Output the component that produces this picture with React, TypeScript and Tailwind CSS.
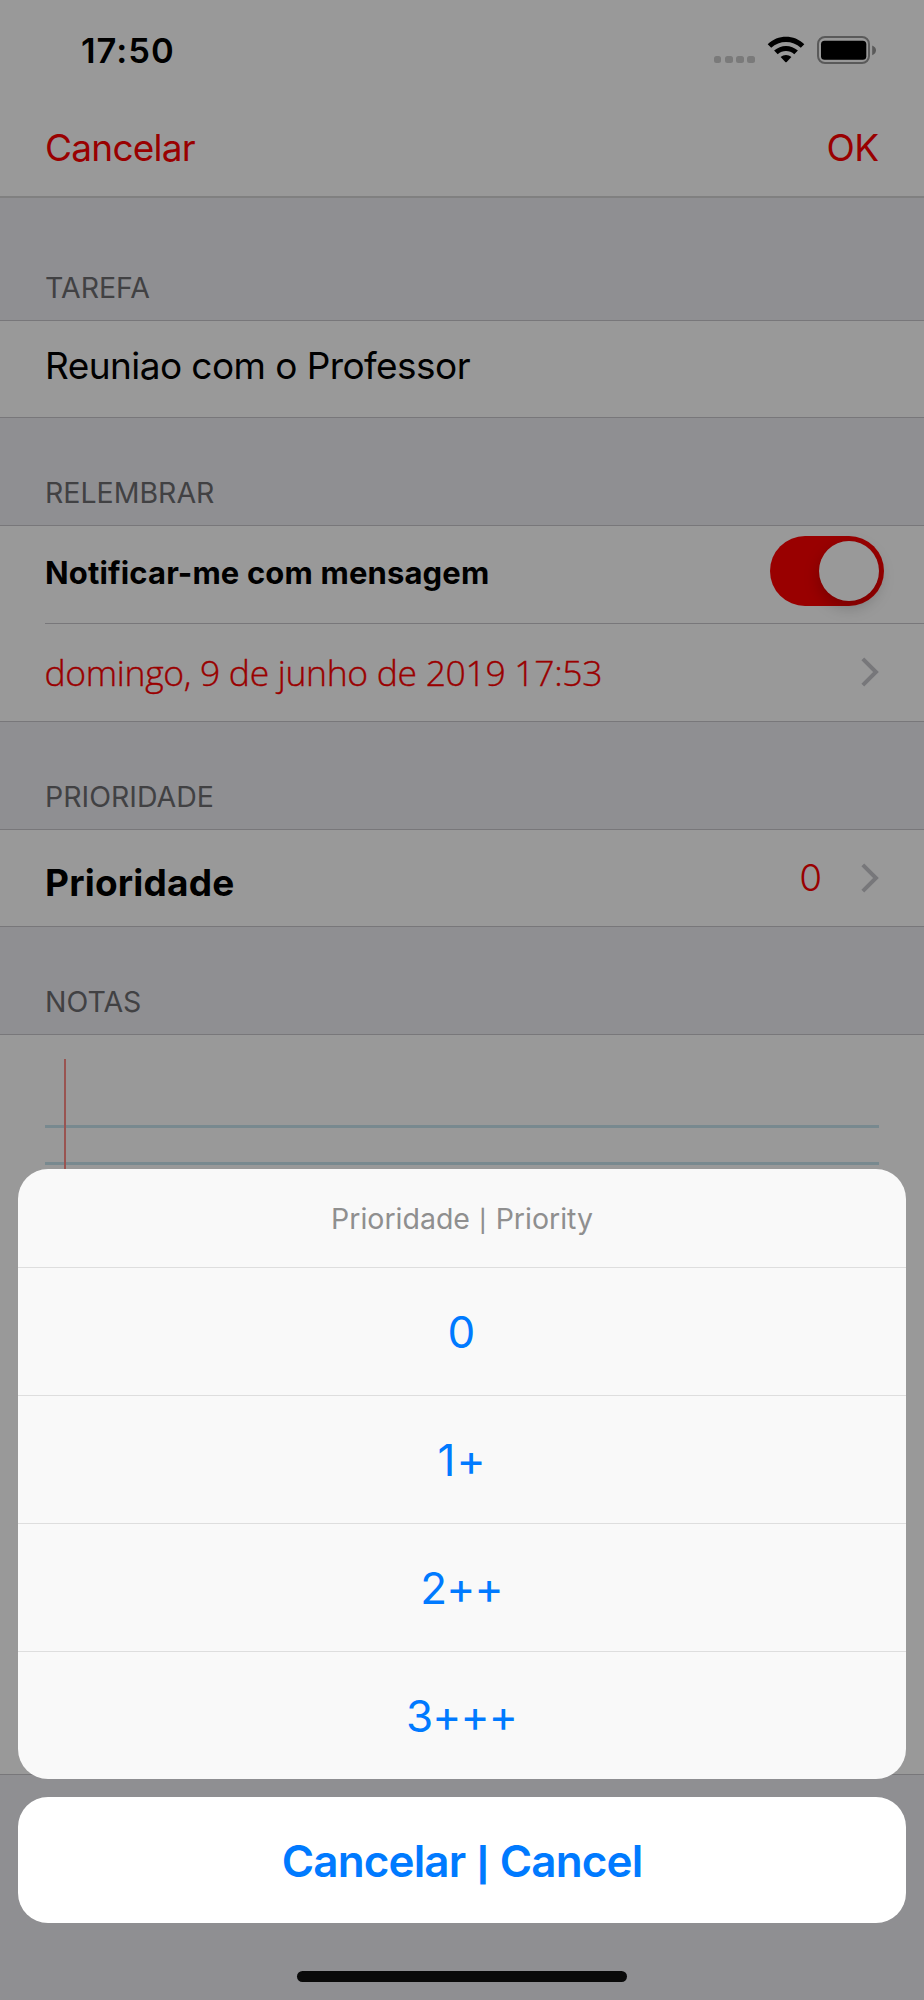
import type { ReactNode } from "react";

const options = [
  { label: "0", spacing: "pr-[1px]" },
  { label: "1+", spacing: "tracking-[1px]" },
  { label: "2++", spacing: "pr-[1px] tracking-[-0.9px]" },
  { label: "3+++", spacing: "pr-[1px] tracking-[-0.9px]" },
];

function StatusBar() {
  return (
    <div className="flex h-[101px] items-center justify-between pr-[47px] pl-[81px]">
      <span className="mt-[2px] text-[34.5px] leading-none font-semibold tracking-[1px]">17:50</span>
      <div className="mb-[1px] flex items-center">
        <div className="mt-[19px] flex gap-[3.5px]">
          {[0, 1, 2, 3].map((i) => (
            <span key={i} className="h-[7.5px] w-[7.7px] rounded-[2.5px] bg-[#cbcbcb]" />
          ))}
        </div>
        <svg className="ml-[12px]" width="38" height="28" viewBox="0 0 38 28" aria-hidden="true">
          <path d="M0.7 8.2 C10.8 -1.7 27.2 -1.7 37.3 8.2 L33.8 11.8 C25.6 4 12.4 4 4.2 11.8 Z" />
          <path d="M7.1 14.6 C13.8 8.3 24.2 8.3 30.9 14.6 L27.3 18.3 C22.5 14 15.5 14 10.7 18.3 Z" />
          <path d="M13.6 21 C16.7 18.3 21.3 18.3 24.4 21 L19.7 26 Q19 26.7 18.3 26 Z" />
        </svg>
        <svg className="ml-[12px]" width="60" height="28" viewBox="0 0 60 28" aria-hidden="true">
          <rect x="1" y="1" width="51" height="26" rx="7" fill="none" stroke="#969696" strokeWidth="2" />
          <rect x="4" y="4.7" width="45.3" height="19" rx="3.5" />
          <path d="M55.2 9.4 Q59 11 59 14.3 Q59 17.6 55.2 19.2 Z" fill="#969696" />
        </svg>
      </div>
    </div>
  );
}

function SectionHeader({ children, className }: { children: ReactNode; className: string }) {
  return (
    <h2
      className={`flex items-end border-b border-[#c8c7cc] pb-[12px] pl-[45px] text-[28.5px] leading-[40px] font-normal text-[#6d6d71] ${className}`}
    >
      {children}
    </h2>
  );
}

function Chevron() {
  return (
    <svg className="mb-[1px]" width="18" height="30" viewBox="0 0 18 30" fill="none" aria-hidden="true">
      <path d="M1.8 1.8 L15 15 L1.8 28.2" stroke="#c7c7cc" strokeWidth="4" />
    </svg>
  );
}

function Toggle() {
  return (
    <div className="flex h-[70px] w-[114px] items-center justify-end rounded-full bg-[#ff0000] pr-[5px]">
      <span className="size-[60px] rounded-full bg-white shadow-[0_6px_16px_rgba(0,0,0,0.22)]" />
    </div>
  );
}

function Notes() {
  return (
    <div className="flex h-[740px] border-b border-[#c8c7cc] bg-white pt-[24px] pr-[45px] pl-[45px]">
      <div className="relative h-full w-full">
        <div className="mt-[66px] h-[2.5px] w-full bg-[#c8e4ee]" />
        <div className="mt-[34.5px] h-[2.5px] w-full bg-[#c8e4ee]" />
        <div className="absolute top-0 left-[19px] h-[640px] w-[2px] bg-[#ff8c87]" />
      </div>
    </div>
  );
}

export default function App() {
  return (
    <div className="relative h-[2000px] w-[924px] overflow-hidden bg-[#efeff4] font-[Inter,sans-serif] text-black">
      <div className="h-[198px] border-b-2 border-[#d5d5d6] bg-white">
        <StatusBar />
        <div className="flex h-[93px] items-center justify-between pr-[45.5px] pl-[45px] text-[37px] leading-none text-[#ff0000]">
          <span className="tracking-[-0.75px]">Cancelar</span>
          <span className="tracking-[-0.6px]">OK</span>
        </div>
      </div>

      <SectionHeader className="h-[123px]">TAREFA</SectionHeader>
      <div className="flex h-[97px] items-center border-b border-[#c8c7cc] bg-white pb-[7px] pl-[45px] text-[37px] leading-none tracking-[-0.57px]">
        Reuniao com o Professor
      </div>

      <SectionHeader className="h-[108px]">RELEMBRAR</SectionHeader>
      <div className="bg-white">
        <div className="ml-[45px] flex h-[98px] items-center justify-between border-b border-[#c8c7cc] pr-[40px] pb-[7px]">
          <span className="mt-[2px] text-[31px] leading-none font-bold tracking-[0.15px]">Notificar-me com mensagem</span>
          <Toggle />
        </div>
      </div>
      <div className="flex h-[98px] items-center justify-between border-b border-[#c8c7cc] bg-white pr-[45px] pl-[44.5px]">
        <span className="font-['Open_Sans',sans-serif] text-[35.5px] leading-none font-light tracking-[-0.32px] text-[#ff0000] [-webkit-text-stroke:0.4px_#ff0000]">
          domingo, 9 de junho de 2019 17:53
        </span>
        <Chevron />
      </div>

      <SectionHeader className="h-[108px]">PRIORIDADE</SectionHeader>
      <div className="flex h-[97px] items-center border-b border-[#c8c7cc] bg-white pr-[45px] pl-[45px]">
        <span className="mt-[9px] mr-auto text-[37px] leading-none font-bold tracking-[0.2px]">Prioridade</span>
        <span className="mr-[39px] mb-[1px] text-[37px] leading-none font-light text-[#ff0000]">0</span>
        <Chevron />
      </div>

      <SectionHeader className="h-[108px]">NOTAS</SectionHeader>
      <Notes />

      <div className="absolute inset-0 bg-black/40" />

      <div className="absolute inset-x-[18px] bottom-0 flex flex-col items-center" role="dialog">
        <div className="w-full overflow-hidden rounded-[30px] bg-[#f9f9f9] text-center">
          <div className="h-[98px] text-[28.5px] leading-[99px] text-[#8f8f8f]">
            Prioridade <span className="px-[1px] text-[22px] font-medium">|</span> Priority
          </div>
          {options.map((o) => (
            <button
              key={o.label}
              className={`block h-[128px] w-full border-t border-[#dedede] pt-[1px] text-[44px] leading-[126px] text-[#007aff] [font-feature-settings:'calt'_0] ${o.spacing}`}
            >
              {o.label}
            </button>
          ))}
        </div>
        <button className="mt-[18px] h-[126px] w-full rounded-[30px] bg-white pt-[1px] text-[44px] leading-[126px] font-semibold tracking-[-0.86px] text-[#007aff]">
          Cancelar <span className="px-[1px] text-[33px] font-extrabold">|</span> Cancel
        </button>
        <div className="mt-[48px] mb-[18px] h-[11px] w-[330px] rounded-full bg-[#0a0a0a]" />
      </div>
    </div>
  );
}
